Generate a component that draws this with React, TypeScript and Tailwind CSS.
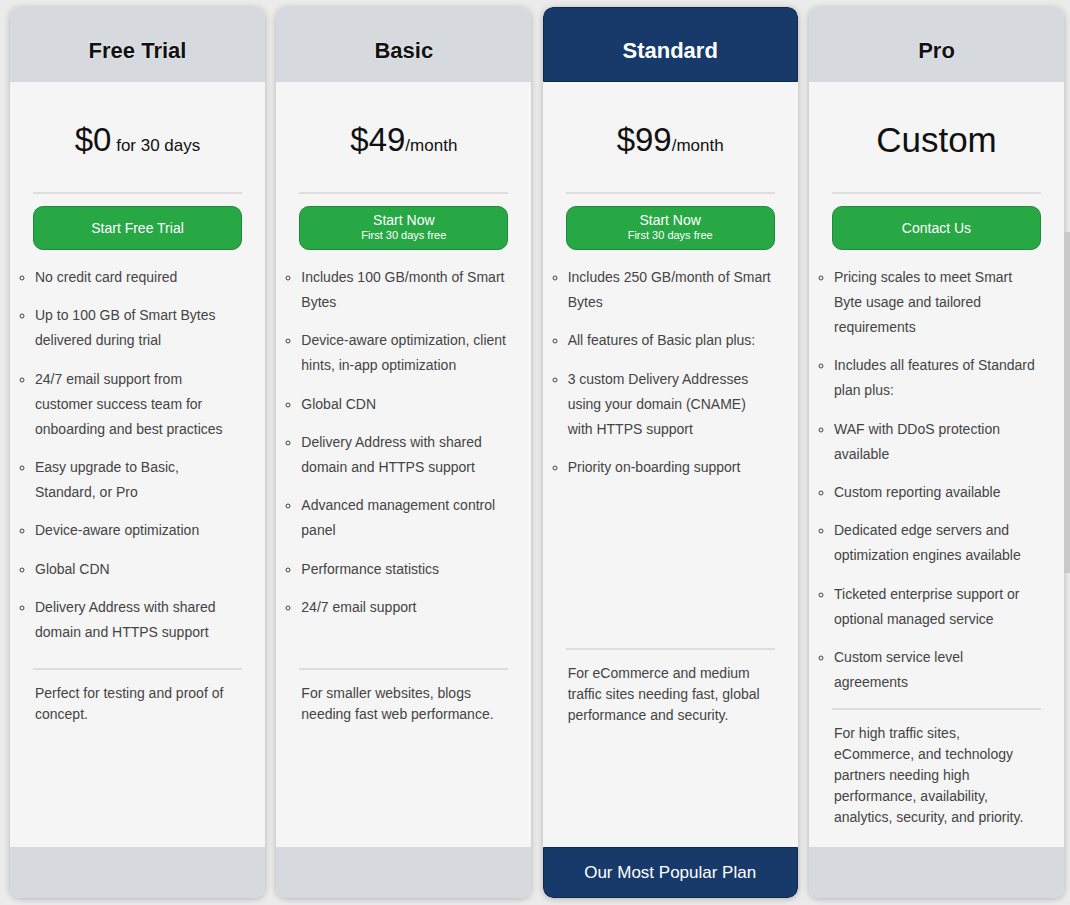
import React from "react";

type Plan = {
  name: string;
  featured?: boolean;
  price: React.ReactNode;
  button: React.ReactNode;
  items: string[];
  listH: string;
  desc: string;
  footer?: string;
};

const twoLine = (
  <span className="flex flex-col items-center -mt-[2px]">
    <span className="text-[14px] leading-[16px]">Start Now</span>
    <span className="text-[11px] leading-[14px]">First 30 days free</span>
  </span>
);

const plans: Plan[] = [
  {
    name: "Free Trial",
    price: (
      <span>
        <span className="text-[33px]">$0</span>
        <span className="text-[17px]"> for 30 days</span>
      </span>
    ),
    button: <span className="text-[14px]">Start Free Trial</span>,
    items: [
      "No credit card required",
      "Up to 100 GB of Smart Bytes delivered during trial",
      "24/7 email support from customer success team for onboarding and best practices",
      "Easy upgrade to Basic, Standard, or Pro",
      "Device-aware optimization",
      "Global CDN",
      "Delivery Address with shared domain and HTTPS support",
    ],
    listH: "min-h-[403px]",
    desc: "Perfect for testing and proof of concept.",
  },
  {
    name: "Basic",
    price: (
      <span>
        <span className="text-[33px]">$49</span>
        <span className="text-[17px]">/month</span>
      </span>
    ),
    button: twoLine,
    items: [
      "Includes 100 GB/month of Smart Bytes",
      "Device-aware optimization, client hints, in-app optimization",
      "Global CDN",
      "Delivery Address with shared domain and HTTPS support",
      "Advanced management control panel",
      "Performance statistics",
      "24/7 email support",
    ],
    listH: "min-h-[403px]",
    desc: "For smaller websites, blogs needing fast web performance.",
  },
  {
    name: "Standard",
    featured: true,
    price: (
      <span>
        <span className="text-[33px]">$99</span>
        <span className="text-[17px]">/month</span>
      </span>
    ),
    button: twoLine,
    items: [
      "Includes 250 GB/month of Smart Bytes",
      "All features of Basic plan plus:",
      "3 custom Delivery Addresses using your domain (CNAME) with HTTPS support",
      "Priority on-boarding support",
    ],
    listH: "min-h-[383px]",
    desc: "For eCommerce and medium traffic sites needing fast, global performance and security.",
    footer: "Our Most Popular Plan",
  },
  {
    name: "Pro",
    price: <span className="inline-block mb-[6px] text-[35px]">Custom</span>,
    button: <span className="text-[14px]">Contact Us</span>,
    items: [
      "Pricing scales to meet Smart Byte usage and tailored requirements",
      "Includes all features of Standard plan plus:",
      "WAF with DDoS protection available",
      "Custom reporting available",
      "Dedicated edge servers and optimization engines available",
      "Ticketed enterprise support or optional managed service",
      "Custom service level agreements",
    ],
    listH: "min-h-[440px]",
    desc: "For high traffic sites, eCommerce, and technology partners needing high performance, availability, analytics, security, and priority.",
  },
];

function Card({ p }: { p: Plan }) {
  return (
    <div className="flex flex-col rounded-[10px] bg-[#f5f5f5] shadow-[0_1px_6px_rgba(0,0,0,0.24)] overflow-hidden">
      <div
        className={
          p.featured
            ? "h-[75px] flex items-center justify-center pt-[11px] rounded-t-[10px] bg-[#173a6b] border border-[#0e2a50] text-white text-[22px] font-bold"
            : "h-[75px] flex items-center justify-center pt-[11px] bg-[#d6d9dd] text-[#111] text-[22px] font-bold [text-shadow:0_0_2px_#fff]"
        }
      >
        {p.name}
      </div>
      <div className="flex-1 flex flex-col px-[23px]">
        <div className="h-[110px] flex items-center justify-center pt-[12px] text-[#111] leading-[40px]">
          {p.price}
        </div>
        <div className="h-[2px] bg-[#dddddd]" />
        <button className="mt-[12px] h-[44px] w-full rounded-[10px] bg-[#28a745] border border-[#1f8a39] text-white flex items-center justify-center">
          {p.button}
        </button>
        <ul className={`mt-[15px] w-[208px] pl-[2px] list-[circle] text-[14px] leading-[25px] text-[#444] ${p.listH}`}>
          {p.items.map((it) => (
            <li key={it} className="mb-[13.33px]">
              {it}
            </li>
          ))}
        </ul>
        <div className="h-[2px] bg-[#dddddd]" />
        <p className="pt-[13px] pb-[19px] pl-[2px] text-[14px] leading-[21px] text-[#444]">{p.desc}</p>
      </div>
      {p.featured ? (
        <div className="h-[51px] flex items-center justify-center rounded-b-[10px] bg-[#173a6b] border border-[#0e2a50] text-white text-[17px]">
          {p.footer}
        </div>
      ) : (
        <div className="h-[51px] bg-[#d6d9dd]" />
      )}
    </div>
  );
}

export default function App() {
  return (
    <div
      className="relative w-[1070px] h-[905px] bg-[#ebebeb] overflow-hidden"
      style={{ fontFamily: '"Liberation Sans", Arial, sans-serif' }}
    >
      <div className="absolute right-0 top-[232px] w-[6px] h-[341px] bg-[#c9c9c9]" />
      <div className="pl-[10px] pt-[7px]">
        <div className="w-[1054px] grid grid-cols-4 gap-[11.33px]">
          {plans.map((p) => (
            <Card key={p.name} p={p} />
          ))}
        </div>
      </div>
    </div>
  );
}
